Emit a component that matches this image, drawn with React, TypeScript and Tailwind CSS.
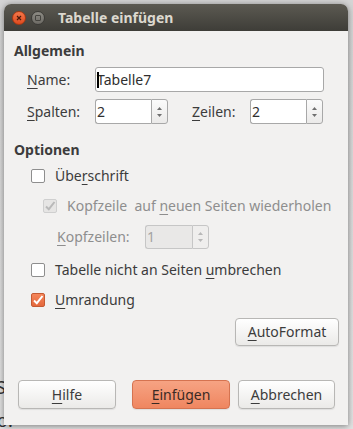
import React from 'react';

const FONT = { fontFamily: '"Noto Sans", "Open Sans", "DejaVu Sans", sans-serif' };

function U({ children }: { children: React.ReactNode }) {
  return <span className="underline decoration-1 underline-offset-[3px]">{children}</span>;
}

function SpinArrows({ disabled }: { disabled?: boolean }) {
  const c = disabled ? '#b8b8b8' : '#6f6f6f';
  return (
    <svg width="7" height="14" viewBox="0 0 7 14">
      <path d="M1 5 L3.5 2 L6 5 Z" fill={c} />
      <path d="M1 9 L3.5 12 L6 9 Z" fill={c} />
    </svg>
  );
}

function SpinBox({ value, width, disabled }: { value: string; width: string; disabled?: boolean }) {
  return (
    <div className={`flex h-full ${width}`}>
      <div
        className={`flex-1 flex items-center pl-[1px] border border-[#a8a8a8] border-r-0 rounded-l-[3px] ${
          disabled ? 'bg-[#e9e8e7] text-[#a3a3a3] border-[#c6c6c6]' : 'bg-white text-[#2f2f2f]'
        }`}
      >
        {value}
      </div>
      <div
        className={`w-[17px] flex items-center justify-center border rounded-r-[3px] ${
          disabled
            ? 'border-[#c6c6c6] bg-[#efeeed]'
            : 'border-[#a8a8a8] bg-gradient-to-b from-[#fbfbfb] to-[#ebeae9]'
        }`}
      >
        <SpinArrows disabled={disabled} />
      </div>
    </div>
  );
}

function CheckBox({ checked, disabled }: { checked?: boolean; disabled?: boolean }) {
  if (checked && disabled) {
    return (
      <div className="shrink-0 w-[14px] h-[14px] rounded-[2px] border border-[#cfcfcf] bg-[#e6e5e4] flex items-center justify-center">
        <svg width="12" height="12" viewBox="0 0 12 12">
          <path d="M2 6.5 L4.8 9.2 L10.5 2" stroke="#b9b9b9" strokeWidth="2" fill="none" />
        </svg>
      </div>
    );
  }
  if (checked) {
    return (
      <div className="shrink-0 w-[14px] h-[14px] rounded-[2px] border border-[#c45a33] bg-gradient-to-b from-[#f5865a] to-[#e4683c] flex items-center justify-center">
        <svg width="12" height="12" viewBox="0 0 12 12">
          <path d="M2 6.5 L4.8 9.2 L10.5 2" stroke="#ffffff" strokeWidth="2" fill="none" />
        </svg>
      </div>
    );
  }
  return <div className="shrink-0 w-[14px] h-[14px] rounded-[2px] border border-[#8e8e8e] bg-white" />;
}

function Button({ children, width, primary }: { children: React.ReactNode; width: string; primary?: boolean }) {
  return (
    <div
      className={`h-full ${width} flex items-center justify-center rounded-[4px] border shadow-[0_1px_1px_rgba(0,0,0,0.08)] ${
        primary
          ? 'border-[#d57350] bg-gradient-to-b from-[#f6a383] to-[#ef8660] text-[#3a2a24]'
          : 'border-[#b8b7b5] bg-gradient-to-b from-[#ffffff] to-[#ebeae8] text-[#3c3c3c]'
      }`}
    >
      {children}
    </div>
  );
}

export default function App() {
  return (
    <div
      className="relative w-[353px] h-[429px] overflow-hidden bg-gradient-to-b from-[#d4d4d4] to-[#e2e2e2] text-[14px] leading-4 text-[#3c3c3c]"
      style={FONT}
    >
      <div className="absolute left-[-4px] top-[379px] text-[18px] text-[#333]">S</div>
      <div className="absolute left-[-3px] top-[412px] text-[18px] text-[#333]">o.</div>

      <div className="relative ml-[4px] mt-[4px] w-[344px] h-[421px] flex flex-col rounded-t-[7px] overflow-hidden bg-[#f2f1f0] shadow-[0_1px_6px_rgba(0,0,0,0.45)]">
        <div className="h-[27px] flex items-center bg-gradient-to-b from-[#5c5a52] to-[#3e3d38]">
          <div className="ml-[8px] w-[14px] h-[14px] rounded-full bg-gradient-to-b from-[#f4774a] to-[#de4a1e] border border-[#a83812] flex items-center justify-center">
            <svg width="6" height="6" viewBox="0 0 6 6">
              <path d="M1 1 L5 5 M5 1 L1 5" stroke="#4a1a0a" strokeWidth="1.2" />
            </svg>
          </div>
          <div className="ml-[5px] w-[14px] h-[14px] rounded-full bg-gradient-to-b from-[#8d8b84] to-[#6d6b65] border border-[#3c3b37] flex items-center justify-center">
            <div className="w-[6px] h-[6px] border border-[#45443f] rounded-[1px]" />
          </div>
          <div className="ml-[13px] text-[14px] font-bold text-[#dcd8cf]">Tabelle einfügen</div>
        </div>

        <div className="mt-[12px] h-4 pl-[10px] font-bold">Allgemein</div>

        <div className="mt-[8px] h-[25px] flex items-center pl-[23px]">
          <div className="w-[68px]">
            <U>N</U>ame:
          </div>
          <div className="relative w-[229px] h-full flex items-center pl-[1px] bg-white border border-[#a8a8a8] rounded-[3px] text-[#2f2f2f]">
            <span className="absolute left-[1px] top-[4px] w-[2px] h-[16px] bg-black" />
            Tabelle7
          </div>
        </div>

        <div className="mt-[7px] h-[25px] flex items-center pl-[23px]">
          <div className="w-[68px]">
            <U>S</U>palten:
          </div>
          <SpinBox value="2" width="w-[73px]" />
          <div className="ml-[24px] w-[58px]">
            <U>Z</U>eilen:
          </div>
          <SpinBox value="2" width="w-[73px]" />
        </div>

        <div className="mt-[18px] h-4 pl-[10px] font-bold">Optionen</div>

        <div className="mt-[10px] h-4 flex items-center pl-[27px] gap-[10px]">
          <CheckBox />
          <span>
            Übe<U>r</U>schrift
          </span>
        </div>

        <div className="mt-[14px] h-4 flex items-center pl-[39px] gap-[10px] text-[#8e8e8e] whitespace-nowrap">
          <CheckBox checked disabled />
          <span>
            Kopfzeile&nbsp; auf <U>n</U>euen Seiten wiederholen
          </span>
        </div>

        <div className="mt-[11px] h-[24px] flex items-center pl-[53px] text-[#8e8e8e]">
          <div className="w-[88px]">
            <U>K</U>opfzeilen:
          </div>
          <SpinBox value="1" width="w-[64px]" disabled />
        </div>

        <div className="mt-[13px] h-4 flex items-center pl-[27px] gap-[10px]">
          <CheckBox />
          <span>
            Tabelle nicht an Seiten <U>u</U>mbrechen
          </span>
        </div>

        <div className="mt-[14px] h-4 flex items-center pl-[27px] gap-[10px]">
          <CheckBox checked />
          <span>
            <U>U</U>mrandung
          </span>
        </div>

        <div className="mt-[10px] h-[28px] flex justify-end pr-[9px]">
          <Button width="w-[104px]">
            <span>
              <U>A</U>utoFormat
            </span>
          </Button>
        </div>

        <div className="mt-[34px] h-[29px] flex pl-[14px]">
          <Button width="w-[98px]">
            <span>
              <U>H</U>ilfe
            </span>
          </Button>
          <div className="ml-[16px] h-full">
            <Button width="w-[98px]" primary>
              <span>
                <U>E</U>infügen
              </span>
            </Button>
          </div>
          <div className="ml-[8px] h-full">
            <Button width="w-[97px]">
              <span>
                <U>A</U>bbrechen
              </span>
            </Button>
          </div>
        </div>
      </div>
    </div>
  );
}
